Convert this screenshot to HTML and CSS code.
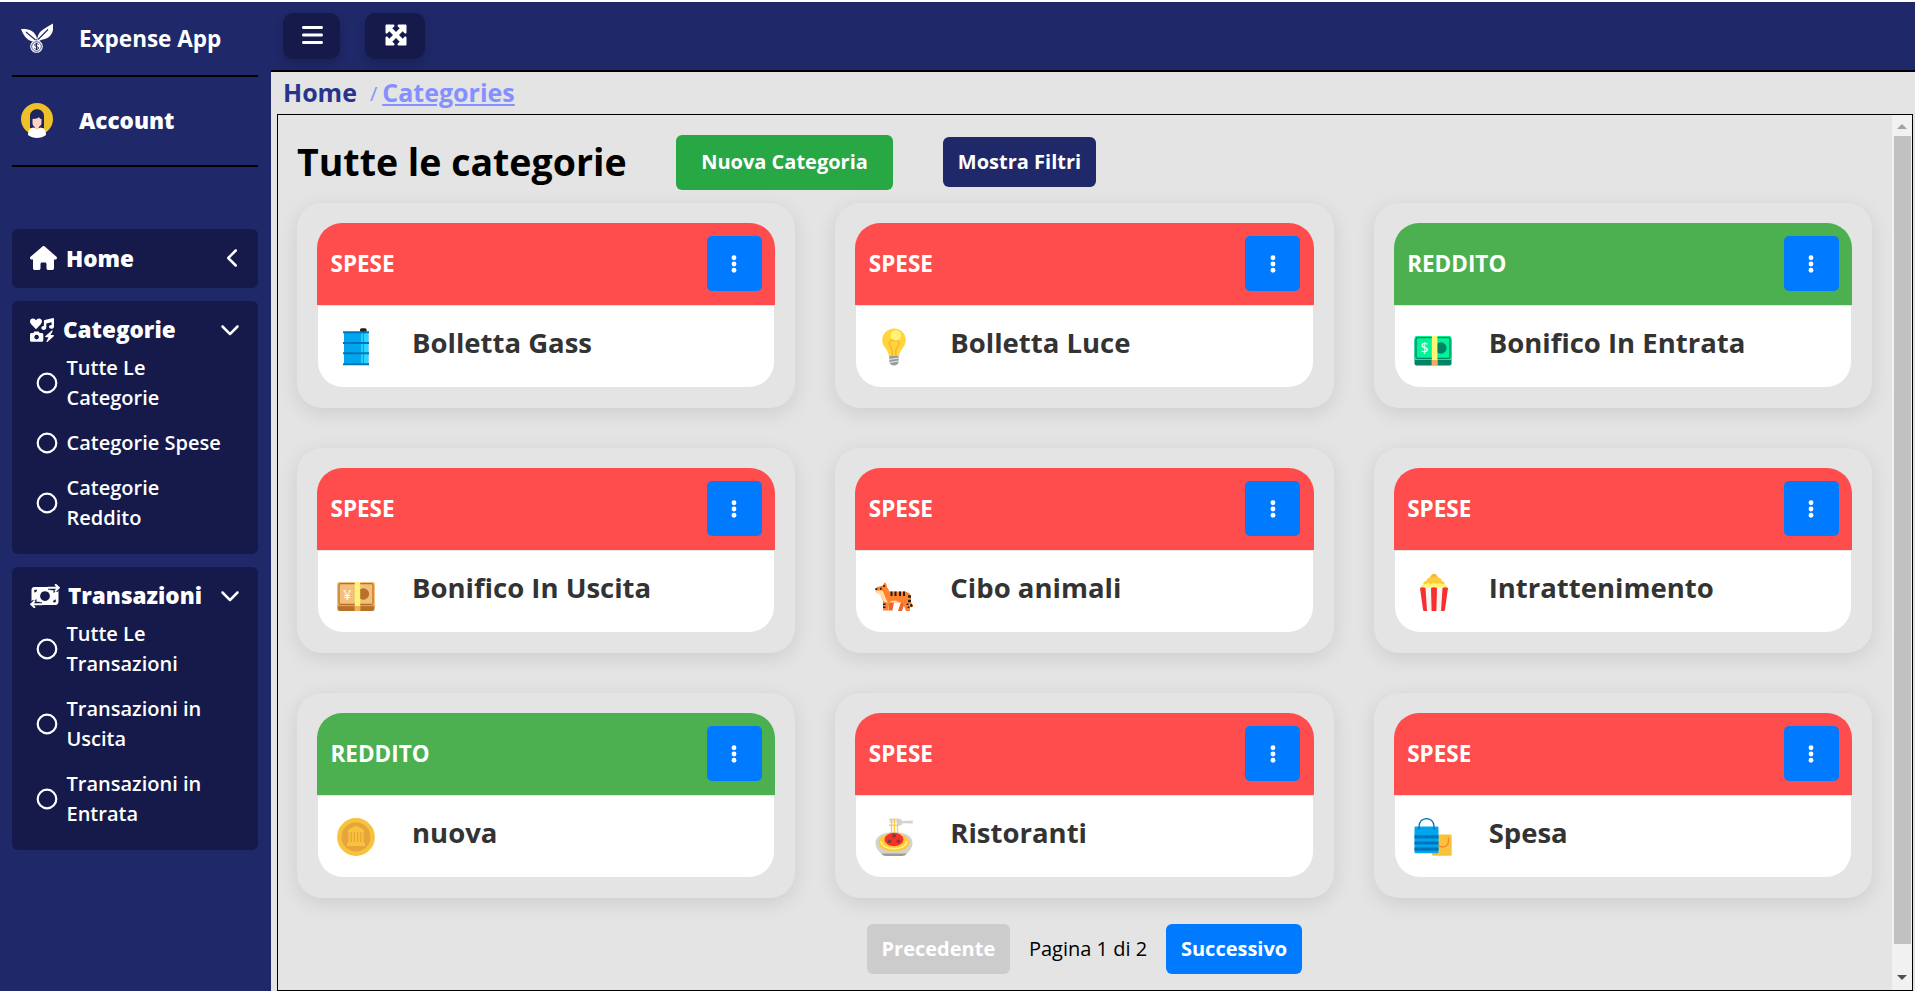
FILE: index.html
```html
<!DOCTYPE html>
<html lang="it">
<head>
<meta charset="utf-8">
<title>Expense App</title>
<link rel="stylesheet" href="styles.css">
</head>
<body>
<svg class="defs" aria-hidden="true">
  <symbol id="chevron-down" viewBox="0 0 512 512"><path d="M233.4 406.6c12.500 12.500 32.800 12.500 45.300 0l192-192c12.500-12.500 12.500-32.800 0-45.300s-32.800-12.500-45.300 0L256 338.700 86.600 169.400c-12.500-12.500-32.800-12.500-45.300 0s-12.500 32.800 0 45.300l192 192z"/></symbol>
  <symbol id="ring" viewBox="0 0 22 22"><circle cx="11" cy="11" r="9.300" fill="none" stroke="#fff" stroke-width="2.200"/></symbol>
  <symbol id="dots" viewBox="0 0 8 20"><circle cx="4" cy="3.750" r="2.400"/><circle cx="4" cy="10" r="2.400"/><circle cx="4" cy="16.250" r="2.400"/></symbol>
</svg>
<div class="app">
  <aside class="sidebar">
    <div class="brand">
      <svg class="logo" viewBox="0 0 32 32">
        <path fill="#fff" d="M0 6c7-.5 14 1 16 9.500-.7 1-1.500 2-1.700 3.200C7 18.500 3 14 0 6zM32 .500c1 7-1 13-8 15.500-3 .5-5 1-7 3-1-1.500-1-3-.5-4.500C18 7 25 5 32 .500z"/>
        <path d="M5 9l9.500 8M27 6.500l-10 10" stroke="#1f2868" stroke-width="1.100" fill="none"/>
        <circle cx="15.500" cy="23.500" r="6.300" fill="#fff"/><circle cx="15.500" cy="23.500" r="4.800" fill="none" stroke="#1f2868" stroke-width=".8"/>
        <path d="M17.600 21.700c-.8-1.500-4-1.300-4 .3s4 1.300 4 3-3.300 1.700-4.200.2M15.500 19.900v7.200" stroke="#1f2868" stroke-width="1" fill="none"/>
      </svg>
      <span class="brand-name">Expense App</span>
    </div>
    <div class="account">
      <svg class="avatar" viewBox="0 0 32 36">
        <circle cx="16" cy="16" r="16" fill="#efc128"/>
        <path fill="#20245f" d="M9 25V13c0-9 14-9 14 0v12z"/>
        <path fill="#ffd3c2" d="M11.500 16c4 0 5.500-1 6.500-2 .5 1.500 1.500 2 2.500 2v4c0 2-1.500 3.300-2.700 4v2.500h-4V24c-1.300-.7-2.300-2-2.300-4z"/>
        <path fill="#fff" d="M7 32c0-5 2-7 6-7.500 1.500 2.500 4.500 2.500 6 0 4 .5 6 2.500 6 7.500-5 4-13 4-18 0z"/>
      </svg>
      <span class="account-name">Account</span>
    </div>
    <nav class="menu">
      <section class="group group-single">
        <div class="group-head">
          <svg class="ico-home" viewBox="0 0 576 512"><path d="M575.800 255.500c0 18-15 32.100-32 32.100h-32l.7 160.200c0 2.700-.2 5.400-.5 8.100V472c0 22.100-17.900 40-40 40H392c-22.100 0-40-17.900-40-40V384c0-17.700-14.300-32-32-32H256c-17.700 0-32 14.300-32 32v88c0 22.100-17.900 40-40 40H104c-22.100 0-40-17.900-40-40V287.600H32c-18 0-32-14-32-32.100c0-9 3-17 10-24L266.400 8c7-7 15-8 22-8s15 2 21 7L564.800 231.500c8 7 12 15 11 24z"/></svg>
          <span class="group-title">Home</span>
          <svg class="chev-left" viewBox="0 0 320 512"><path d="M9.400 233.400c-12.500 12.500-12.500 32.800 0 45.300l192 192c12.500 12.500 32.800 12.500 45.300 0s12.500-32.800 0-45.300L77.300 256 246.600 86.600c12.500-12.500 12.500-32.800 0-45.300s-32.800-12.500-45.300 0l-192 192z"/></svg>
        </div>
      </section>
      <section class="group">
        <div class="group-head">
          <svg class="ico-cat" viewBox="0 0 24 24">
            <path d="M6 11.300L1 6C-1 3.500.2.500 2.700.4 4.300.3 5.300 1.300 6 2.300 6.700 1.300 7.700.3 9.300.4c2.500.1 3.700 3.100 1.700 5.600z"/>
            <path d="M23.200.1c.5-.1.800.2.800.6V8.400c0 1.400-1.200 2.300-2.600 2.300s-2.400-.8-2.400-1.900 1.100-2 2.600-1.900V4.200l-5.300 1.400v4c0 1.400-1.200 2.300-2.600 2.300s-2.400-.8-2.400-1.900S12.500 8 13.900 8.100V3c0-.5.300-.9.800-1z"/>
            <path fill-rule="evenodd" d="M4.200 13.500h4.600l.8 1.500h2.200c.9 0 1.500.6 1.500 1.500v5.700c0 .9-.6 1.500-1.500 1.500H1.500C.6 23.700 0 23.100 0 22.200v-5.700C0 15.600.6 15 1.500 15h1.900zM6.600 16.800a2.300 2.300 0 1 0 .01 0z"/>
            <path d="M21.800 12.500l-6.500 5.700c-.5.500-.2 1 .3 1h2.900l-2 4c-.3.700.4 1.100.9.700l6.300-5.700c.5-.5.200-1.100-.4-1.100h-2.800l2.100-3.900c.3-.6-.3-1.100-.8-.7z"/>
          </svg>
          <span class="group-title">Categorie</span>
          <svg class="chev-down"><use href="#chevron-down"/></svg>
        </div>
        <ul class="items">
          <li><svg><use href="#ring"/></svg><span>Tutte Le Categorie</span></li>
          <li><svg><use href="#ring"/></svg><span>Categorie Spese</span></li>
          <li><svg><use href="#ring"/></svg><span>Categorie Reddito</span></li>
        </ul>
      </section>
      <section class="group">
        <div class="group-head">
          <svg class="ico-trans" viewBox="0 0 30 24">
            <path fill-rule="evenodd" d="M4.500 3H20.500v3.300h3V9l5-3.500V17.500c0 2-1 3.500-3 3.500H9.500v-3.300h-3V15l-5 3.500V6c0-2 1-3 3-3zM15 7.200a4.900 4.900 0 1 0 .01 0zM4.300 5.800v2.800c1.500 0 2.800-1.300 2.800-2.800zM25.800 18.300v-2.800c-1.500 0-2.800 1.300-2.800 2.800z"/>
            <path d="M18 3.800h10M25.600.8l3.200 3-3.200 3M12 20.200H2M4.400 17.200l-3.200 3 3.200 3" stroke="#151a4a" stroke-width="4" fill="none"/>
            <path d="M18 3.800h10M25.600.8l3.200 3-3.200 3M12 20.200H2M4.400 17.200l-3.200 3 3.200 3" stroke="#fff" stroke-width="1.900" fill="none" stroke-linecap="round"/>
          </svg>
          <span class="group-title">Transazioni</span>
          <svg class="chev-down"><use href="#chevron-down"/></svg>
        </div>
        <ul class="items">
          <li><svg><use href="#ring"/></svg><span>Tutte Le Transazioni</span></li>
          <li><svg><use href="#ring"/></svg><span>Transazioni in Uscita</span></li>
          <li><svg><use href="#ring"/></svg><span>Transazioni in Entrata</span></li>
        </ul>
      </section>
    </nav>
  </aside>

  <div class="main">
    <header class="topbar">
      <button class="nav-btn nav-menu"><svg class="ico-bars" viewBox="0 0 448 512"><path d="M0 96C0 78.300 14.300 64 32 64H416c17.700 0 32 14.300 32 32s-14.300 32-32 32H32C14.300 128 0 113.700 0 96zM0 256c0-17.700 14.300-32 32-32H416c17.700 0 32 14.300 32 32s-14.300 32-32 32H32c-17.700 0-32-14.300-32-32zM448 416c0 17.700-14.300 32-32 32H32c-17.700 0-32-14.300-32-32s14.300-32 32-32H416c17.700 0 32 14.300 32 32z"/></svg></button>
      <button class="nav-btn nav-full"><svg class="ico-max" viewBox="0 0 512 512"><path d="M200 32H56C42.700 32 32 42.700 32 56V200c0 9.700 5.800 18.500 14.800 22.200s19.300 1.700 26.200-5.200l40-40 79 79-79 79L73 295c-6.900-6.900-17.200-8.900-26.200-5.200S32 302.300 32 312V456c0 13.300 10.700 24 24 24H200c9.700 0 18.500-5.800 22.200-14.800s1.700-19.300-5.200-26.200l-40-40 79-79 79 79-40 40c-6.900 6.900-8.900 17.200-5.200 26.200s12.500 14.800 22.200 14.800H456c13.300 0 24-10.700 24-24V312c0-9.700-5.800-18.500-14.800-22.200s-19.300-1.700-26.200 5.200l-40 40-79-79 79-79 40 40c6.900 6.900 17.200 8.900 26.200 5.200s14.800-12.500 14.800-22.200V56c0-13.300-10.700-24-24-24H312c-9.700 0-18.500 5.800-22.200 14.800s-1.700 19.300 5.200 26.200l40 40-79 79-79-79 40-40c6.900-6.900 8.900-17.200 5.200-26.200S209.700 32 200 32z"/></svg></button>
    </header>
    <div class="breadcrumb"><a class="crumb">Home</a><span class="slash">/</span><a class="crumb crumb-active">Categories</a></div>
    <div class="panel">
      <div class="content">
        <div class="toolbar">
          <h1>Tutte le categorie</h1>
          <button class="btn btn-new">Nuova Categoria</button>
          <button class="btn btn-filter">Mostra Filtri</button>
        </div>
        <div class="grid">
          <article class="card">
            <div class="card-head expense"><span>SPESE</span><button class="more"><svg><use href="#dots"/></svg></button></div>
            <div class="card-body">
              <svg class="emoji" viewBox="0 0 38 38">
                <rect x="23" y=".3" width="6.600" height="4" rx="1.500" fill="#212121"/>
                <rect x="7" y="4" width="24.500" height="32" fill="#00a6ed"/>
                <rect x="24" y="5" width="2" height="31" fill="#26c9fc"/><rect x="27" y="5" width="4" height="31" fill="#26d9fc"/>
                <path d="M6 3.200h26v2H6zM6 13.900h26v2H6zM6 24.300h26v2H6zM6 35.200h26v2H6z" fill="#0074ba"/>
              </svg>
              <h2>Bolletta Gass</h2>
            </div>
          </article>
          <article class="card">
            <div class="card-head expense"><span>SPESE</span><button class="more"><svg><use href="#dots"/></svg></button></div>
            <div class="card-body">
              <svg class="emoji" viewBox="0 0 38 38">
                <path d="M19 .4c6.600 0 11.800 5.200 11.800 11.600 0 7.300-6 9-6.700 16H13.900C13.200 21 7.200 19.300 7.200 12 7.200 5.600 12.400.4 19 .4z" fill="#ffd53d"/>
                <path d="M17.200 28V22c-1.500-3-3-4-3-6.500 0-3 3-4 4.800-2.500 1.800-1.500 4.800-.5 4.800 2.500 0 2.500-1.500 3.500-3 6.500v6" fill="none" stroke="#ffb02e" stroke-width="1.400"/>
                <circle cx="20.800" cy="7.400" r="5.200" fill="#fff478"/>
                <path d="M14.300 28h9.400v5.500c0 2-2 4-4.700 4s-4.700-2-4.700-4z" fill="#9b9b9b"/>
                <path d="M14 31.500l10-1.500M14 34.500l10-1.500" stroke="#e6e6e6" stroke-width="1.200"/>
              </svg>
              <h2>Bolletta Luce</h2>
            </div>
          </article>
          <article class="card">
            <div class="card-head income"><span>REDDITO</span><button class="more"><svg><use href="#dots"/></svg></button></div>
            <div class="card-body">
              <svg class="emoji" viewBox="0 0 38 38">
                <rect x=".5" y="10" width="37" height="27.500" rx="2" fill="#008463"/>
                <path d="M.5 10q0-2 2-2h33q2 0 2 2v22H.5z" fill="#00f397"/>
                <rect x="2" y="9.700" width="34" height="20.600" rx="1.500" fill="none" stroke="#008463" stroke-width="1.300"/>
                <circle cx="26.800" cy="20" r="5.800" fill="#008463"/>
                <path d="M17.800 8h5.600v29.500h-5.600z" fill="#fff478"/><path d="M17.800 32h5.600v5.500h-5.600z" fill="#f3ad61"/>
                <text x="10.500" y="25.300" class="coin-sign">$</text>
              </svg>
              <h2>Bonifico In Entrata</h2>
            </div>
          </article>
          <article class="card">
            <div class="card-head expense"><span>SPESE</span><button class="more"><svg><use href="#dots"/></svg></button></div>
            <div class="card-body">
              <svg class="emoji" viewBox="0 0 38 38">
                <rect x=".5" y="11" width="37" height="27" rx="2" fill="#b97028"/>
                <path d="M0 11q0-2 2-2h34q2 0 2 2v21H0z" fill="#f3c07b"/>
                <path d="M.2 32.500h37.600" stroke="#e39d53" stroke-width="1.500"/>
                <rect x="2" y="10.700" width="34" height="20.600" rx="1.500" fill="none" stroke="#b97028" stroke-width="1.200"/>
                <circle cx="26.300" cy="21" r="5.800" fill="#b97028"/>
                <path d="M17.800 9h5.400v29h-5.400z" fill="#fff478"/><path d="M17.800 33h5.400v5h-5.400z" fill="#f3ad61"/>
                <text x="10.200" y="26.500" class="coin-sign">¥</text>
              </svg>
              <h2>Bonifico In Uscita</h2>
            </div>
          </article>
          <article class="card">
            <div class="card-head expense"><span>SPESE</span><button class="more"><svg><use href="#dots"/></svg></button></div>
            <div class="card-body">
              <svg class="emoji" viewBox="0 0 38 38">
                <path d="M13.500 29h5.500l-1.500 8.500h-4zM26 29l4 0-3 9h-4z" fill="#f3622b"/>
                <path d="M31 20.500c5 0 3 6 3.500 9l2.300 3.500" stroke="#ff822d" stroke-width="2.600" fill="none" stroke-linecap="round"/>
                <path d="M33 23.500h3M33 28h3M35.500 31.500l1.300 2" stroke="#212121" stroke-width="2.400"/>
                <path d="M.7 16C1 13.500 5 13.500 7.500 12.800L9.500 9.500c1.500 0 2.500 2.500 2.500 4.500l2.500 4.500H30c3 0 3.500 3 3 6v5l2 5v3.500h-4L28 30.500l-2-1H14L13 37.500H8V28C6.500 25 6 23 5.500 21.500 3.500 21 1 20 .7 18z" fill="#ff822d"/>
                <path d="M1 17c3 1.500 5-.5 6.500 1s3 8 5.500 11.500c-3 0-5-1-5.500-3L5.500 21.500C3 21.500 1 19.500 1 17zM14 29.500c3-2.500 8-2 10 0z" fill="#ffdea7"/>
                <path d="M15.500 18.500h2v4.500h-2zM19.500 18.500h2v4.500h-2zM24 18.500h2v4.500h-2zM28 18.500h2v4.500h-2zM8 30.500h2.500V32H8zM8 33.500h2.500V35H8zM31.500 30.500h2V32h-2zM32.500 33.500h2V35h-2zM.3 15.300h2v1.800h-2zM5 14.700h1.700v2H5zM8 12.300h2v1.500H8z" fill="#212121"/>
              </svg>
              <h2>Cibo animali</h2>
            </div>
          </article>
          <article class="card">
            <div class="card-head expense"><span>SPESE</span><button class="more"><svg><use href="#dots"/></svg></button></div>
            <div class="card-body">
              <svg class="emoji" viewBox="0 0 38 38">
                <path d="M17.500 2q2.500-2.500 5 0l2 3h-9z" fill="#f9b23c"/>
                <path d="M9.500 13c-1-3 1-5 3-5 0-3 3-4 4.500-3 2-2 5-2 6 0 3-1 5 1 4.500 3 2.500 0 4 3 2.500 5z" fill="#ffcb36"/>
                <path d="M7 15.500c-1-4 3-5.500 5-4 1-2 4-2 5 0 1.500-2 4.500-2 6 0 1.500-2 4-1.500 5 0 3-1.500 6 1 5 4z" fill="#fff478"/>
                <path d="M6.500 14.500h27L30.500 38h-21z" fill="#f4f4f4"/>
                <path d="M6 15q2.800-1.500 5.500 0l1.500 23h-2.500q-1.500 0-1.500-1.500zM17 15q3-1.500 6 0l-.6 23h-4.800zM28.500 15q2.800-1.500 5.500 0l-3 21.500q0 1.500-1.500 1.500H27z" fill="#f92f2f"/>
              </svg>
              <h2>Intrattenimento</h2>
            </div>
          </article>
          <article class="card">
            <div class="card-head income"><span>REDDITO</span><button class="more"><svg><use href="#dots"/></svg></button></div>
            <div class="card-body">
              <svg class="emoji" viewBox="0 0 38 38">
                <circle cx="19" cy="19" r="18.900" fill="#f9c23c"/><circle cx="19" cy="19" r="14.500" fill="#e5a43c"/>
                <path d="M19 7.500l8.200 4.500v2H10.800v-2zM11.500 14h2v11h-2zM14.800 14h2v10h-2zM18 14h2v10h-2zM21.200 14h2v10h-2zM24.500 14h2v11h-2zM11 24h16v1h1v3H10v-3h1z" fill="#f9c23c"/>
              </svg>
              <h2>nuova</h2>
            </div>
          </article>
          <article class="card">
            <div class="card-head expense"><span>SPESE</span><button class="more"><svg><use href="#dots"/></svg></button></div>
            <div class="card-body">
              <svg class="emoji" viewBox="0 0 38 38">
                <path d="M14 .8h10q2.500 0 3.500 2.300l10.200-.6v3L27.500 5.300Q26.500 8 24 8H14V6.500h8v-2h-8V3.500h8V2.500h-8z" fill="#d3d3d3"/>
                <path d="M.5 25C.5 18 8 14 19 14s18.500 4 18.500 11c0 6-4 9-7.500 12H8C4.500 34 .5 31 .5 25z" fill="#d3d3d3"/>
                <path d="M6 35.500h26c-2 1.800-3 2.500-5 2.500H11c-2 0-3-.7-5-2.500z" fill="#9b9b9b"/>
                <path d="M3.500 24C4 18 12 15.500 19 15.500S34 18 34.500 24c0 6-6 9.500-15.500 9.500S3.500 30 3.500 24z" fill="#ffc83d"/>
                <path d="M6 23c.5 5 6 7.800 13 7.800S31.500 28 32 23" stroke="#fff478" stroke-width="1.500" fill="none"/>
                <path d="M16.500.8v15M19.500.8v15M22.500.8v15" stroke="#ffc83d" stroke-width="1.300"/>
                <ellipse cx="19" cy="21.500" rx="9.500" ry="6.800" fill="#f92f2f"/>
                <circle cx="19" cy="17.800" r="1.900" fill="#6d4534"/><circle cx="14.500" cy="23.300" r="1.900" fill="#6d4534"/><circle cx="23.500" cy="23.300" r="1.900" fill="#6d4534"/>
              </svg>
              <h2>Ristoranti</h2>
            </div>
          </article>
          <article class="card">
            <div class="card-head expense"><span>SPESE</span><button class="more"><svg><use href="#dots"/></svg></button></div>
            <div class="card-body">
              <svg class="emoji" viewBox="0 0 38 38">
                <rect x="18" y="16.500" width="19.700" height="21.200" rx="1.200" fill="#f9c23c"/>
                <path d="M22.500 19v4c0 8 12 8 12 0v-3" stroke="#ff822d" stroke-width="1.400" fill="none" stroke-linecap="round"/>
                <rect x=".5" y="8.500" width="24" height="26.700" rx="1.200" fill="#00a6ed"/>
                <path d="M.5 17.300h24v3.200H.5zM.5 23.400h24v3.200H.5zM.5 29.500h24v3.200H.5z" fill="#0074ba"/>
                <path d="M5 12V8.500c0-10.500 15-10.500 15 0V12" stroke="#0074ba" stroke-width="1.300" fill="none"/>
              </svg>
              <h2>Spesa</h2>
            </div>
          </article>
        </div>
        <div class="pager">
          <button class="btn btn-prev">Precedente</button>
          <span class="page-info">Pagina 1 di 2</span>
          <button class="btn btn-next">Successivo</button>
        </div>
      </div>
      <div class="scrollbar"><i class="arrow arrow-up"></i><div class="thumb"></div><i class="arrow arrow-down"></i></div>
    </div>
  </div>
</div>
</body>
</html>
```
FILE: styles.css
```css
* { box-sizing: border-box; }
body { margin: 0; background: #fff; font-family: "Open Sans", "Noto Sans", sans-serif; font-size: 20px; color: #000; overflow: hidden; }
button { font: inherit; border: 0; padding: 0; display: flex; align-items: center; justify-content: center; color: #fff; }
h1, h2, ul { margin: 0; padding: 0; }
svg { display: block; flex: none; fill: #fff; }
.defs { position: absolute; width: 0; height: 0; }
.app { display: flex; height: 991px; padding-top: 2px; }

.sidebar { width: 271px; flex: none; background: #1f2868; padding: 0 13px 0 12px; color: #fff; }
.brand, .account { display: flex; align-items: center; border-bottom: 2px solid #000; padding-left: 9px; font-size: 22.500px; line-height: 32px; }
.brand { height: 75px; font-weight: 700; }
.account { height: 90px; font-weight: 800; }
.logo { width: 32px; height: 32px; }
.avatar { width: 32px; height: 36px; }
.brand-name, .account-name { margin-left: 26px; white-space: nowrap; }
.brand-name { padding-top: 1px; }
.menu { display: flex; flex-direction: column; gap: 12.500px; padding-top: 62px; }
.group { background: #151a4a; border-radius: 6px; padding: 0 18px 21.500px; }
.group-single { padding-bottom: 0; }
.group-head { display: flex; align-items: flex-start; height: 52px; padding-top: 5px; font-size: 22.500px; font-weight: 800; line-height: 47px; }
.group-single .group-head { height: 59px; }
.group-single .group-title { line-height: 49px; }
.group-title { flex: 1; white-space: nowrap; }
.ico-home { width: 27px; height: 24px; margin: 12px 9px 0 0; }
.ico-cat { width: 24px; height: 24px; margin: 12px 9px 0 0; }
.ico-trans { width: 30px; height: 24px; margin: 12px 8px 0 0; }
.chev-left { width: 12.500px; height: 20px; margin: 14px 1px 0 0; }
.chev-down { width: 20px; height: 20px; margin: 13px 0 0; }
.items { list-style: none; display: flex; flex-direction: column; gap: 15px; font-weight: 600; line-height: 30px; }
.items li { display: flex; align-items: center; padding-left: 5.500px; }
.items span { max-width: 160px; }
.items svg { width: 22px; height: 22px; margin-right: 9px; }

.main { flex: 1; display: flex; flex-direction: column; background: #e4e4e4; min-width: 0; }
.topbar { height: 70px; flex: none; background: #1f2868; border-bottom: 2px solid #000; display: flex; gap: 25px; padding: 11px 0 0 12px; }
.nav-btn { height: 46px; background: #151a4a; border-radius: 10px; box-shadow: 0 5px 8px rgba(0,0,0,.15); padding-bottom: 2px; }
.nav-menu { width: 57px; padding-left: 1px; }
.nav-full { width: 60px; }
.ico-bars { width: 21px; height: 24px; }
.ico-max { width: 24px; height: 24px; margin-left: 2px; }
.breadcrumb { height: 42px; flex: none; display: flex; align-items: center; padding: 0 0 2px 12px; font-size: 25px; line-height: 33px; }
.crumb { font-weight: 700; color: #26348b; }
.slash { margin: 3px 5px 0 13px; font-size: 20px; color: #8490ff; }
.crumb-active { color: #8490ff; text-decoration: underline; }
.panel { flex: 1; margin: 0 2px 0 6px; border: 1px solid #000; display: flex; }
.content { flex: 1; padding: 20px 20px 0 19px; }
.toolbar { display: flex; align-items: center; height: 55px; }
h1 { font-size: 37.500px; line-height: 51px; font-weight: 700; white-space: nowrap; width: 379px; padding-bottom: 2px; }
.btn { height: 50px; border-radius: 6px; font-weight: 700; padding-bottom: 1px; }
.btn-new { width: 217px; height: 55px; background: #28a745; margin-right: 50px; padding-bottom: 2px; }
.btn-filter { width: 153px; background: #1f2868; margin-bottom: 1px; }
.grid { display: grid; grid-template-columns: repeat(3, 1fr); gap: 39.700px 40px; margin-top: 13px; }
.card { height: 205.300px; padding: 20px; border-radius: 25px; background: #e4e4e4; box-shadow: 0 5px 20px rgba(0,0,0,.1); }
.card-head { height: 82px; border-radius: 25px 25px 0 0; display: flex; align-items: center; justify-content: space-between; padding: 0 13.500px; color: #fff; font-size: 22.500px; font-weight: 700; }
.card-head span { padding-bottom: 1px; }
.expense { background: #ff4d4d; }
.income { background: #4caf50; }
.more { width: 55px; height: 55px; border-radius: 5px; background: #007bff; margin-bottom: .4px; }
.more svg { width: 8px; height: 20px; }
.card-body { height: 81.300px; margin: 1px 1px 0; border-radius: 0 0 25px 25px; background: #fff; display: flex; align-items: center; padding-left: 19px; }
.emoji { width: 38px; height: 38px; }
.coin-sign { font: 400 14px "Open Sans", sans-serif; fill: #fff; text-anchor: middle; }
h2 { font-size: 27.500px; font-weight: 700; color: #333; margin-left: 37px; padding-bottom: 9px; white-space: nowrap; }
.pager { display: flex; justify-content: center; align-items: center; gap: 19px; margin-top: 26px; }
.page-info { padding-bottom: 2px; }
.btn-prev { width: 143px; background: #ccc; }
.btn-next { width: 136px; background: #007bff; }
.scrollbar { width: 20px; background: #f1f1f1; display: flex; flex-direction: column; align-items: center; padding: 9px 0; }
.arrow { border: 5px solid transparent; width: 0; height: 0; }
.arrow-up { border-top: 0; border-bottom-color: #a3a3a3; }
.arrow-down { border-bottom: 0; border-top-color: #505050; }
.thumb { width: 17px; height: 808px; background: #c1c1c1; margin: 7px 0 31px; }
```
